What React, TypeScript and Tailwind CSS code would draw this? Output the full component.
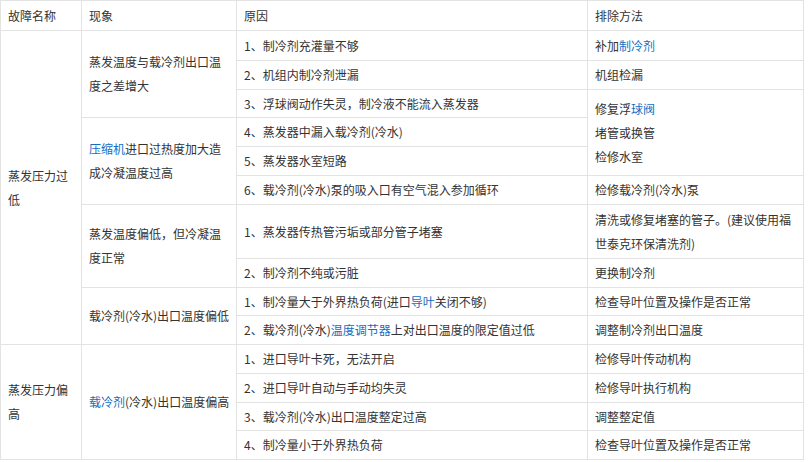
const link = "text-[#136ec2]";

function A({ children }: { children: React.ReactNode }) {
  return <span className={link}>{children}</span>;
}

const td = "border border-[#e3e3e3] px-[7px] py-0 align-middle";
const tdNowrap = `${td} whitespace-nowrap pr-[2px]`;

export default function App() {
  return (
    <div className="bg-white w-[808px] h-[462px] overflow-hidden">
      <table
        className="table-fixed border-collapse w-[803px] text-[12px] leading-[24px] text-[#333]"
        style={{ fontFamily: '"Noto Sans CJK SC", "Noto Sans", sans-serif' }}
      >
        <colgroup>
          <col className="w-[81px]" />
          <col className="w-[155px]" />
          <col className="w-[351px]" />
          <col className="w-[216px]" />
        </colgroup>
        <tbody>
          <tr className="h-[30px]">
            <td className={td}>故障名称</td>
            <td className={td}>现象</td>
            <td className={td}>原因</td>
            <td className={td}>排除方法</td>
          </tr>
          <tr className="h-[30px]">
            <td className={td} rowSpan={10}>蒸发压力过低</td>
            <td className={td} rowSpan={3}>蒸发温度与载冷剂出口温度之差增大</td>
            <td className={td}>1、制冷剂充灌量不够</td>
            <td className={td}>补加<A>制冷剂</A></td>
          </tr>
          <tr className="h-[29px]">
            <td className={td}>2、机组内制冷剂泄漏</td>
            <td className={td}>机组检漏</td>
          </tr>
          <tr className="h-[28px]">
            <td className={td}>3、浮球阀动作失灵，制冷液不能流入蒸发器</td>
            <td className={td} rowSpan={3}>
              修复浮<A>球阀</A>
              <br />
              堵管或换管
              <br />
              检修水室
            </td>
          </tr>
          <tr className="h-[29px]">
            <td className={td} rowSpan={3}>
              <A>压缩机</A>进口过热度加大造成冷凝温度过高
            </td>
            <td className={td}>4、蒸发器中漏入载冷剂(冷水)</td>
          </tr>
          <tr className="h-[29px]">
            <td className={td}>5、蒸发器水室短路</td>
          </tr>
          <tr className="h-[29px]">
            <td className={td}>6、载冷剂(冷水)泵的吸入口有空气混入参加循环</td>
            <td className={td}>检修载冷剂(冷水)泵</td>
          </tr>
          <tr className="h-[54px]">
            <td className={td} rowSpan={2}>蒸发温度偏低，但冷凝温度正常</td>
            <td className={td}>1、蒸发器传热管污垢或部分管子堵塞</td>
            <td className={td}>清洗或修复堵塞的管子。(建议使用福世泰克环保清洗剂)</td>
          </tr>
          <tr className="h-[29px]">
            <td className={td}>2、制冷剂不纯或污脏</td>
            <td className={td}>更换制冷剂</td>
          </tr>
          <tr className="h-[28px]">
            <td className={tdNowrap} rowSpan={2}>
              载冷剂(冷水)出口温度偏低
            </td>
            <td className={td}>
              1、制冷量大于外界热负荷(进口<A>导叶</A>关闭不够)
            </td>
            <td className={td}>检查导叶位置及操作是否正常</td>
          </tr>
          <tr className="h-[29px]">
            <td className={td}>
              2、载冷剂(冷水)<A>温度调节器</A>上对出口温度的限定值过低
            </td>
            <td className={td}>调整制冷剂出口温度</td>
          </tr>
          <tr className="h-[29px]">
            <td className={td} rowSpan={4}>蒸发压力偏高</td>
            <td className={tdNowrap} rowSpan={4}>
              <A>载冷剂</A>(冷水)出口温度偏高
            </td>
            <td className={td}>1、进口导叶卡死，无法开启</td>
            <td className={td}>检修导叶传动机构</td>
          </tr>
          <tr className="h-[29px]">
            <td className={td}>2、进口导叶自动与手动均失灵</td>
            <td className={td}>检修导叶执行机构</td>
          </tr>
          <tr className="h-[28px]">
            <td className={td}>3、载冷剂(冷水)出口温度整定过高</td>
            <td className={td}>调整整定值</td>
          </tr>
          <tr className="h-[29px]">
            <td className={td}>4、制冷量小于外界热负荷</td>
            <td className={td}>检查导叶位置及操作是否正常</td>
          </tr>
        </tbody>
      </table>
    </div>
  );
}
